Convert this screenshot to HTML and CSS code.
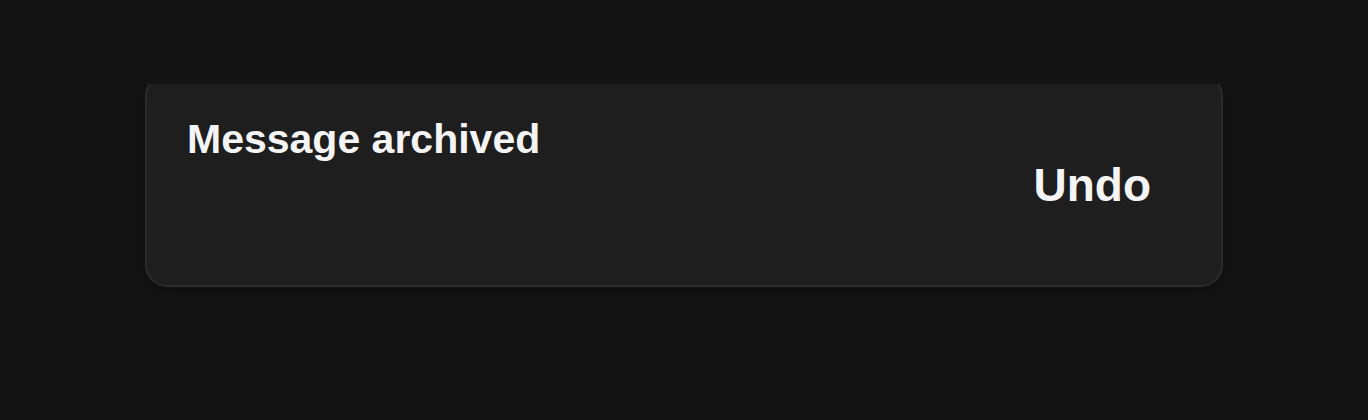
FILE: index.html
```html
<!DOCTYPE html>
<html lang="en">
<head>
    <meta charset="UTF-8">
    <meta name="viewport" content="width=device-width, initial-scale=1.0">
    <title>Toast</title>
    <link rel="stylesheet" href="styles.css">
</head>
<body>
    <div class="stage">
        <div class="toast">
            <div class="toast-title">Message archived</div>
            <button class="toast-action">Undo</button>
        </div>
    </div>
</body>
</html>
```

FILE: styles.css
```css
html, body {
    height: 100%;
}
body {
    font-family: "Liberation Sans", Arial, sans-serif;
    background-color: #141414;
    color: #f4f4f4;
    margin: 0;
}
.stage {
    margin-top: 84px;
    padding: 0 145px 40px;
    overflow: hidden;
}
.toast {
    margin-top: -10px;
    height: 213px;
    box-sizing: border-box;
    display: flex;
    justify-content: space-between;
    align-items: flex-start;
    padding: 40px 40px;
    background: #1e1e1e;
    border: 2px solid #2b2b2b;
    border-radius: 22px;
    box-shadow: 0 4px 14px rgba(0, 0, 0, 0.35);
}
.toast-title {
    font-size: 41px;
    font-weight: 700;
    line-height: 47px;
}
.toast-action {
    align-self: center;
    margin-top: 8px;
    padding: 0 30px;
    background: none;
    border: none;
    color: #f4f4f4;
    font-family: inherit;
    font-size: 46px;
    font-weight: 700;
    cursor: pointer;
}
```
